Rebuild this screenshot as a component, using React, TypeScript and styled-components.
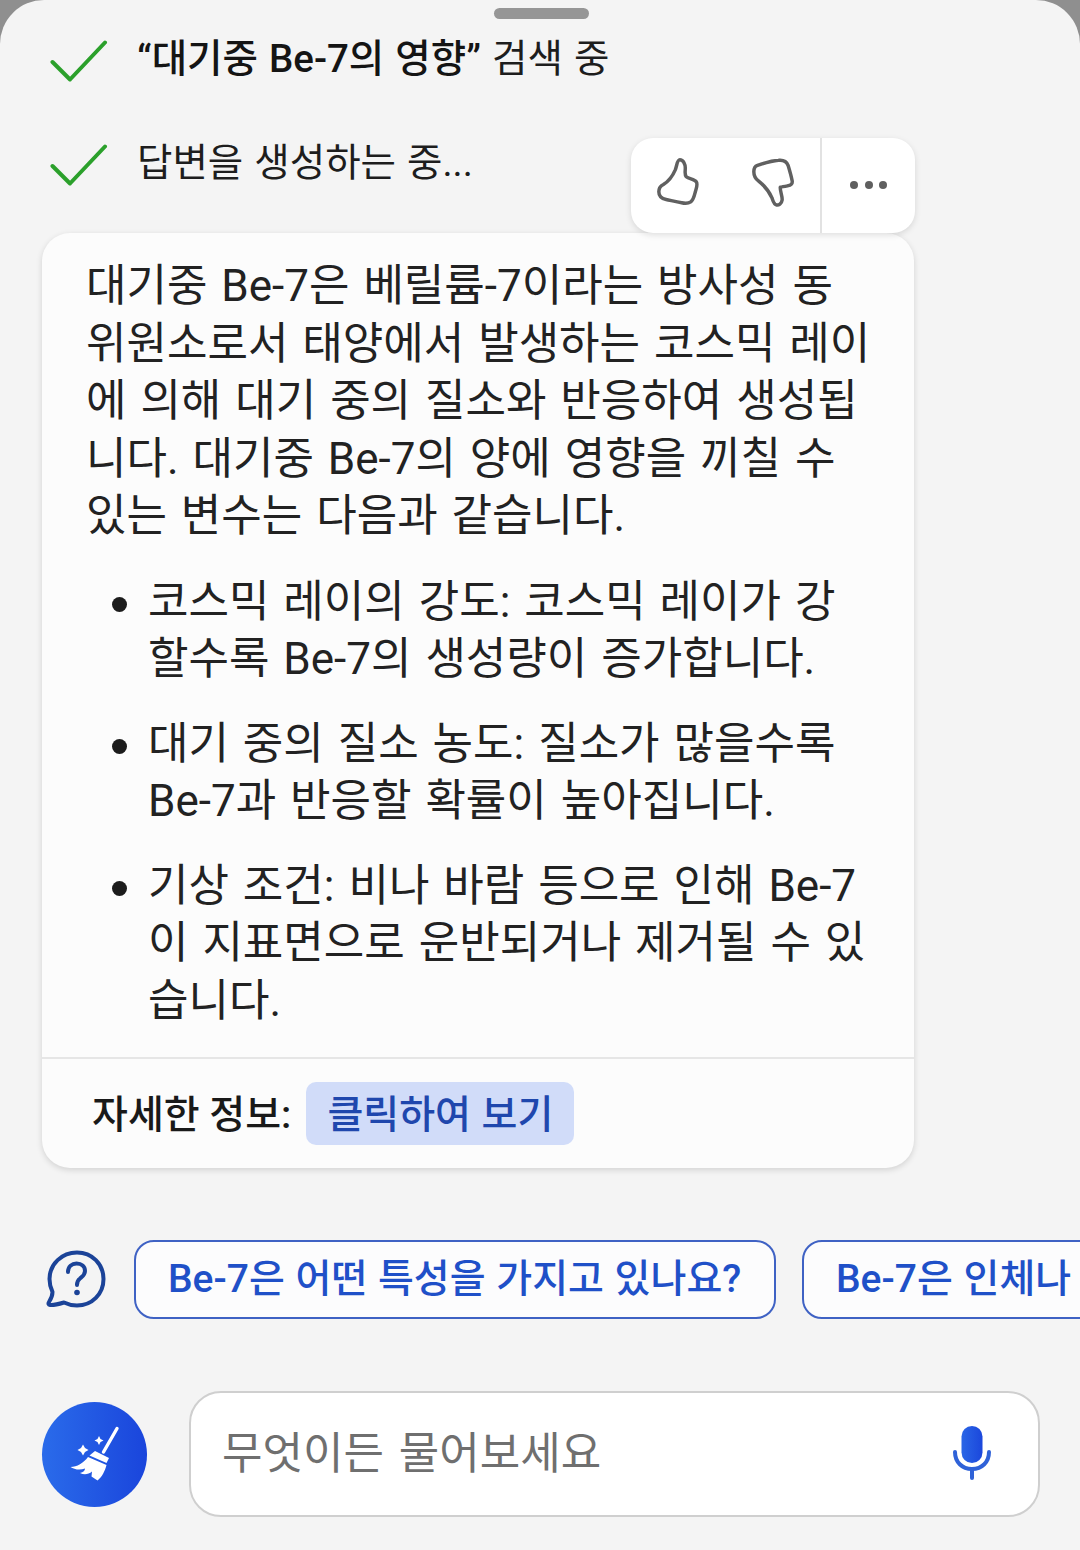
import styled, { createGlobalStyle } from 'styled-components'

const GlobalStyle = createGlobalStyle`
  html, body { margin: 0; padding: 0; background: #8f8f8f; }
  body { font-family: "Roboto", "Noto Sans CJK KR", sans-serif; }
`

const Sheet = styled.div`
  width: 1080px;
  height: 1550px;
  background: #f4f4f4;
  border-radius: 44px 44px 0 0;
  overflow: hidden;
  position: relative;
  box-sizing: border-box;
`
const GrabberRow = styled.div`
  display: flex;
  justify-content: center;
  padding-top: 8px;
  height: 11px;
  margin-left: 3px;
`
const Grabber = styled.div`
  width: 95px;
  height: 11px;
  background: #969696;
  border-radius: 6px;
`
const Status = styled.div<{ $gap: number }>`
  display: flex;
  align-items: center;
  height: 60px;
  padding-left: 50px;
  margin-top: ${(p) => p.$gap}px;
  position: relative;
  svg { margin-top: 5px; }
`
const StatusText = styled.span`
  margin: 0 0 6px 29px;
  font-size: 38.5px;
  color: #1d1d1d;
  white-space: nowrap;
  word-spacing: 1.5px;
  b { font-weight: 500; color: #141414; }
`
const Card = styled.div`
  margin: 41px 0 0 42px;
  width: 872px;
  background: #fcfcfc;
  border-radius: 28px;
  box-shadow: 0 2px 6px rgba(0, 0, 0, 0.14);
  position: relative;
`
const ActionBar = styled.div`
  position: absolute;
  left: 589px;
  top: -95px;
  width: 284px;
  height: 95px;
  background: #fff;
  border-radius: 22px;
  box-shadow: 0 2px 6px rgba(0, 0, 0, 0.12);
  display: flex;
  z-index: 2;
`
const VoteGroup = styled.div`
  width: 189px;
  position: relative;
  border-right: 2px solid #e2e2e2;
`
const VoteIcon = styled.svg<{ $left: number }>`
  position: absolute;
  left: ${(p) => p.$left}px;
  top: 20px;
`
const MoreBox = styled.div`
  flex: 1;
  display: flex;
  align-items: center;
  justify-content: center;
  gap: 6.5px;
  padding-bottom: 2px;
`
const Dot = styled.span`
  width: 8px;
  height: 8px;
  border-radius: 50%;
  background: #5f5f5f;
`
const Body = styled.div`
  padding: 25px 30px 1px 44px;
  font-size: 44px;
  line-height: 57.5px;
  color: #222;
  white-space: nowrap;
  word-spacing: 3px;
`
const Bullets = styled.ul`
  list-style: none;
  margin: 28px 0 0;
  padding: 0 0 0 62px;
`
const Bullet = styled.li`
  position: relative;
  margin-bottom: 27px;
  &::before {
    content: '';
    position: absolute;
    left: -36px;
    top: 23px;
    width: 15px;
    height: 15px;
    border-radius: 50%;
    background: #1c1c1c;
  }
`
const Footer = styled.div`
  margin-top: -1px;
  border-top: 2px solid #e6e6e6;
  height: 111px;
  box-sizing: border-box;
  display: flex;
  align-items: center;
  padding: 0 0 0 50px;
  gap: 15px;
`
const FooterLabel = styled.span`
  font-size: 39px;
  font-weight: 500;
  color: #191919;
  white-space: nowrap;
  margin-bottom: 5px;
`
const FooterLink = styled.span`
  height: 63px;
  width: 268px;
  box-sizing: border-box;
  padding-bottom: 5px;
  background: #d1dcf9;
  border-radius: 10px;
  display: flex;
  align-items: center;
  justify-content: center;
  font-size: 39px;
  font-weight: 500;
  color: #1f47ad;
  white-space: nowrap;
  word-spacing: 1px;
`
const Suggestions = styled.div`
  display: flex;
  align-items: center;
  margin-top: 71px;
  padding-left: 46px;
  height: 80px;
  overflow: hidden;
`
const BubbleIcon = styled.svg`
  flex: 0 0 60px;
  margin-right: 28px;
`
const Chip = styled.div<{ $width: number }>`
  flex: 0 0 ${(p) => p.$width}px;
  height: 79px;
  box-sizing: border-box;
  border: 2px solid #3f62c4;
  border-radius: 20px;
  background: #fcfcfd;
  color: #1f50c8;
  font-size: 39px;
  font-weight: 500;
  line-height: 75px;
  padding-left: 32px;
  white-space: nowrap;
  word-spacing: 1px;
  & + & { margin-left: 26px; }
`
const Composer = styled.div`
  display: flex;
  align-items: center;
  margin-top: 72px;
  padding-left: 42px;
`
const Broom = styled.div`
  width: 105px;
  height: 105px;
  border-radius: 50%;
  background: linear-gradient(90deg, #2a6bea, #1a45dc);
  display: flex;
  align-items: center;
  justify-content: center;
`
const Input = styled.div`
  margin-left: 42px;
  width: 851px;
  height: 126px;
  box-sizing: border-box;
  background: #fff;
  border: 2px solid #cfcfcf;
  border-radius: 32px;
  display: flex;
  align-items: center;
  justify-content: space-between;
  padding: 0 47px 2px 31px;
`
const Placeholder = styled.span`
  font-size: 44px;
  color: #6f6f6f;
  white-space: nowrap;
  word-spacing: 4px;
  margin-bottom: 6px;
`

const Check = () => (
  <svg width="58" height="42" viewBox="0 0 58 42" fill="none">
    <path d="M2.5 22 L20 39.5 L55 2.5" stroke="#2ba02b" strokeWidth="4" strokeLinecap="round" strokeLinejoin="round" />
  </svg>
)

const ThumbUp = () => (
  <VoteIcon $left={26} width="42" height="49.3" viewBox="0 0 46 54" fill="none">
    <path
      d="M25 2 C29 2 31 7 31 11 C31 15 30 18 32 20.5 C35 23 41 23 43 26 C45 29 43 33 42 37 C41 41 40 46 37 48 C34 50 31 50 27 49 C21 48 15 46.5 10 45.5 C5 44.5 2 42 2 37 C2 33 3 31 7 29 C12 26 17 20 20 13 C22 8 22 2 25 2 Z"
      stroke="#606060"
      strokeWidth="3.8"
      strokeLinejoin="round"
    />
  </VoteIcon>
)

const ThumbDown = () => (
  <VoteIcon $left={121} width="42" height="49.3" viewBox="0 0 46 54" fill="none">
    <path
      d="M6 8 C12 6 22 3 29 2.5 C34 2 38 4 39.5 8 C41 13 43 20 44 25 C44.5 28 43 30 39 30.5 C36 31 33 31.5 31 32 C30.5 36 33.5 42 33 46 C32.5 50 29 52 27 51.5 C24 51 23 47 22 44 C19 37 12 29 7 25 C3 22 2 19 2 15 C2 12 3 9 6 8 Z"
      stroke="#606060"
      strokeWidth="3.8"
      strokeLinejoin="round"
    />
  </VoteIcon>
)

const QuestionBubble = () => (
  <BubbleIcon width="60" height="58" viewBox="0 0 60 58" fill="none">
    <path
      d="M31 2.5 C46 2.5 57.5 14 57.5 29 C57.5 44 46 55.5 31 55.5 C26 55.5 22 54.5 18 52.5 C13 54 8 55.5 4 55 C2.5 54.8 2 53.5 3 52 C5 49 6.5 46 6.5 42 C4.5 38 3.5 34 3.5 29 C3.5 14 16 2.5 31 2.5 Z"
      stroke="#1b4398"
      strokeWidth="4"
      strokeLinejoin="round"
    />
    <path
      d="M22 22 C22 16.5 26 13.5 30.5 13.5 C35.5 13.5 39 16.5 39 21 C39 25 36.5 26.5 34 28.5 C32 30 31 31.5 31 35"
      stroke="#1b4398"
      strokeWidth="4"
      strokeLinecap="round"
    />
    <circle cx="31" cy="42.5" r="2.8" fill="#1b4398" />
  </BubbleIcon>
)

const BroomIcon = () => (
  <svg width="50" height="56" viewBox="0 0 50 56" fill="#fff">
    <path d="M47 2.5 L33.5 26" stroke="#fff" strokeWidth="3.4" strokeLinecap="round" />
    <path d="M25 25 L39 32 L36.5 37 L19.5 29.5 Z" />
    <path d="M18 31 L36.5 39 C35 45 32 51 27.5 54.5 L21.5 50.5 L22 45.5 C18.5 48.5 14 49 10 47 C13.5 46 15 44.5 15 42.5 C10 44.5 4 43.5 0.5 41 C7 41 13.5 37 18 31 Z" />
    <path d="M29 10 L30.5 13 L33.5 14.5 L30.5 16 L29 19 L27.5 16 L24.5 14.5 L27.5 13 Z" />
    <path d="M13 18.5 L15 22 L18.5 24 L15 26 L13 29.5 L11 26 L7.5 24 L11 22 Z" />
  </svg>
)

const MicIcon = () => (
  <svg width="38" height="54" viewBox="0 0 38 54" fill="none">
    <defs>
      <linearGradient id="mic" x1="0" x2="1" y1="0" y2="0">
        <stop offset="0" stopColor="#2a66e6" />
        <stop offset="1" stopColor="#1b47dc" />
      </linearGradient>
    </defs>
    <rect x="8.5" y="0" width="21" height="37" rx="10.5" fill="url(#mic)" />
    <path d="M2 26 C2 36 9 43 19 43 C29 43 36 36 36 26" stroke="#2f62d8" strokeWidth="4" strokeLinecap="round" />
    <path d="M19 43 L19 52" stroke="#2f62d8" strokeWidth="4" strokeLinecap="round" />
  </svg>
)

export default function App() {
  return (
    <>
      <GlobalStyle />
      <Sheet>
        <GrabberRow>
          <Grabber />
        </GrabberRow>
        <Status $gap={9}>
          <Check />
          <StatusText>
            <b>“대기중 Be-7의 영향”</b> 검색 중
          </StatusText>
        </Status>
        <Status $gap={44}>
          <Check />
          <StatusText>답변을 생성하는 중...</StatusText>
        </Status>
        <Card>
          <ActionBar>
            <VoteGroup>
              <ThumbUp />
              <ThumbDown />
            </VoteGroup>
            <MoreBox>
              <Dot />
              <Dot />
              <Dot />
            </MoreBox>
          </ActionBar>
          <Body>
            대기중 Be-7은 베릴륨-7이라는 방사성 동<br />
            위원소로서 태양에서 발생하는 코스믹 레이<br />
            에 의해 대기 중의 질소와 반응하여 생성됩<br />
            니다. 대기중 Be-7의 양에 영향을 끼칠 수<br />
            있는 변수는 다음과 같습니다.
            <Bullets>
              <Bullet>
                코스믹 레이의 강도: 코스믹 레이가 강<br />
                할수록 Be-7의 생성량이 증가합니다.
              </Bullet>
              <Bullet>
                대기 중의 질소 농도: 질소가 많을수록<br />
                Be-7과 반응할 확률이 높아집니다.
              </Bullet>
              <Bullet>
                기상 조건: 비나 바람 등으로 인해 Be-7<br />
                이 지표면으로 운반되거나 제거될 수 있<br />
                습니다.
              </Bullet>
            </Bullets>
          </Body>
          <Footer>
            <FooterLabel>자세한 정보:</FooterLabel>
            <FooterLink>클릭하여 보기</FooterLink>
          </Footer>
        </Card>
        <Suggestions>
          <QuestionBubble />
          <Chip $width={642}>Be-7은 어떤 특성을 가지고 있나요?</Chip>
          <Chip $width={400}>Be-7은 인체나</Chip>
        </Suggestions>
        <Composer>
          <Broom>
            <BroomIcon />
          </Broom>
          <Input>
            <Placeholder>무엇이든 물어보세요</Placeholder>
            <MicIcon />
          </Input>
        </Composer>
      </Sheet>
    </>
  )
}
